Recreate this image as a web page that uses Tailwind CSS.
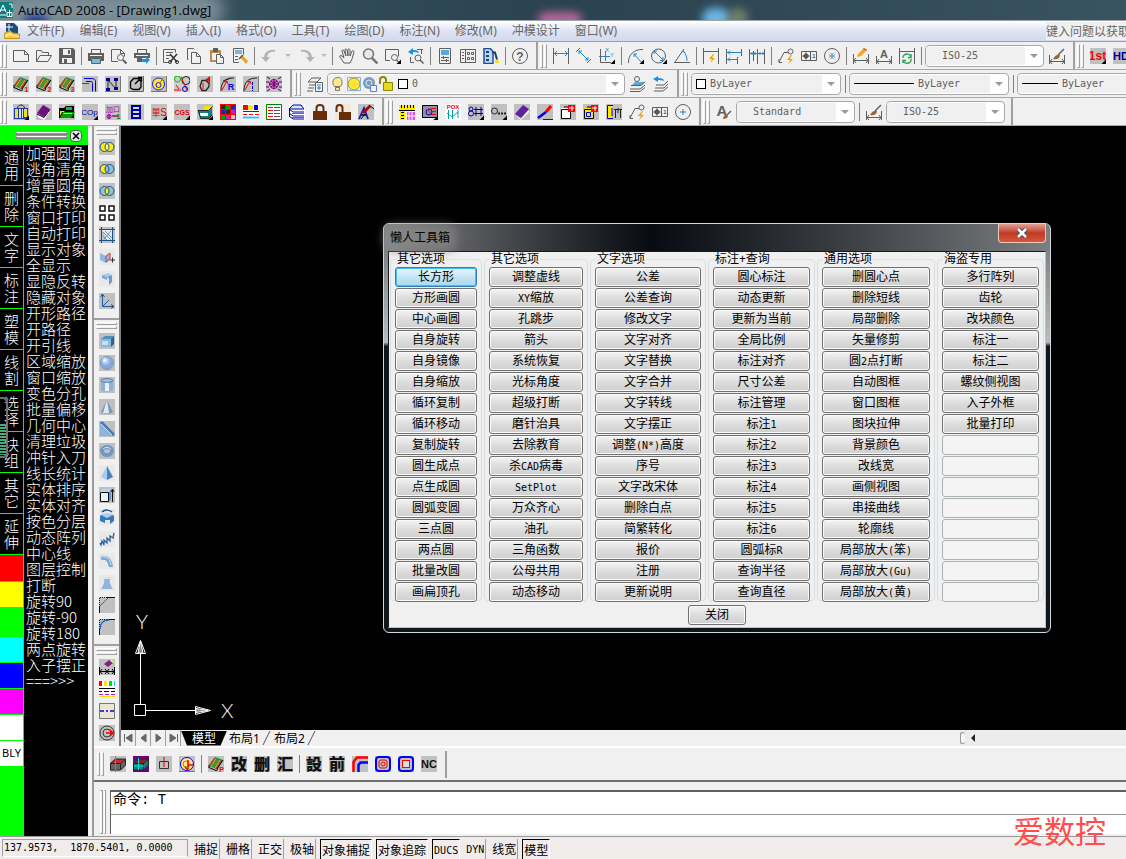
<!DOCTYPE html>
<html lang="zh-CN">
<head>
<meta charset="utf-8">
<title>AutoCAD 2008 - [Drawing1.dwg]</title>
<script src="https://cdn.jsdelivr.net/npm/@tailwindcss/browser@4"></script>
</head>
<body class="flex h-screen flex-col overflow-hidden bg-[#f0f0f0] font-['Noto_Sans','Noto_Sans_CJK_SC',sans-serif] text-xs text-black">

<header class="shrink-0">
  <div class="relative flex h-[21px] items-center overflow-hidden border-b border-[#9aa5aa] bg-linear-to-r from-[#3c5664] via-[#2b4350] to-[#3a5361]">
    <span class="absolute -left-4 -top-2 h-9 w-60 rounded-full bg-[#8fa0a8]/80 blur-sm"></span>
    <span class="absolute left-6 top-4 h-3 w-6 rounded-full bg-[#1d2f9e] blur-xs"></span>
    <span class="absolute left-[538px] top-3 h-4 w-11 rounded-full bg-[#b5659c] blur-xs"></span>
    <span class="absolute left-[702px] top-2 h-5 w-7 rounded-full bg-[#6cb4e4] blur-xs"></span>
    <span class="absolute left-[728px] top-2 h-5 w-5 rounded-full bg-[#8c9a6c]/70 blur-xs"></span>
    <svg class="relative h-4 w-[13px] shrink-0" viewBox="0 0 13 16"><path fill="#0e7c7b" d="M0 0h13v16H0z"/><path fill="none" stroke="#fff" d="M0 10l3-7 3 7M0 8h6M7 10.500h5v4H7zM9.500 8v7M0 13h6M9 2h3v4"/></svg>
    <h1 class="relative ml-[5px] whitespace-nowrap font-['Open_Sans','Noto_Sans_CJK_SC',sans-serif] text-[13px] leading-5">AutoCAD 2008 - [Drawing1.dwg]</h1>
  </div>
  <nav class="flex h-[21px] items-center border-b border-[#a0a0a0] bg-linear-to-b from-white via-[#dfe4f3] to-[#d3daee] pl-1 text-[#666]" aria-label="菜单">
    <svg class="mr-[7px] size-4 shrink-0" viewBox="0 0 16 16"><path fill="#1a4d7c" d="M2 0h8l4 4v8H2z"/><path fill="#f6c945" stroke="#c9971e" d="M.5 15.500v-5.500l6-2 2 2 7 1v4.500z"/><path fill="#ffe9a0" d="M1 12l6-2 2 2 6 1v1l-6-1-2-1-6 2z"/><path stroke="#fff" d="M5 1v7M2 4h7"/></svg>
    <div id="menus" class="flex gap-[15px] whitespace-nowrap"></div>
    <input class="ml-auto h-[18px] w-20 shrink-0 bg-[#f0f0f0] text-xs text-[#666] placeholder:text-[#666] placeholder:opacity-100" aria-label="帮助搜索" placeholder="键入问题以获取帮助">
  </nav>
</header>

<div id="bars" class="shrink-0 overflow-hidden"></div>

<main class="flex min-h-0 flex-1">
  <aside class="relative flex w-[88px] shrink-0 flex-col bg-black text-white">
    <div class="flex h-[19px] shrink-0 items-center bg-[#00ff00] pl-4">
      <span class="mr-[3px] flex w-[51px] flex-col gap-px"><i class="h-[3px] border border-[#808080] border-t-white"></i><i class="h-[3px] border border-[#808080] border-t-white"></i></span>
      <button aria-label="关闭面板" class="flex size-3 items-center justify-center rounded-sm border border-[#555] bg-[#e8e8e8]"><svg class="size-2" viewBox="0 0 8 8"><path stroke="#000" stroke-width="1.600" d="M1 1l6 6M7 1L1 7"/></svg></button>
    </div>
    <div class="flex min-h-0 flex-1">
      <div id="cats" class="flex w-6 shrink-0 flex-col border-r border-[#00ff00] bg-[#00ff00]"></div>
      <div id="cmds" class="flex flex-1 flex-col items-start overflow-hidden pl-[2px] font-['Noto_Sans_CJK_SC',sans-serif] text-[15px] leading-4 font-light whitespace-nowrap"></div>
    </div>
    <svg class="absolute left-0 top-[271px] h-[61px] w-2" viewBox="0 0 8 61"><path fill="none" stroke="#707070" stroke-width="2" d="M0 1h4l3 3v53l-3 3H0"/><path stroke="#3fae7c" stroke-width="6" stroke-dasharray="2 1" d="M3 27v31"/></svg>
  </aside>
  <div class="w-[6px] shrink-0 border-r-2 border-[#9a9a9a] bg-[#f4f4f4]"></div>

  <div class="flex min-w-0 flex-1 flex-col">
    <div class="flex min-h-0 flex-1">
      <div id="vbar" class="flex w-[25px] shrink-0 flex-col items-center"></div>
      <div class="flex min-w-0 flex-1 flex-col border-l-2 border-[#808080]">
        <section class="relative min-h-0 flex-1 bg-black" aria-label="绘图区">
          <svg class="absolute bottom-[7px] left-2 h-28 w-28" viewBox="0 0 112 112" fill="none" stroke="#fff"><path d="M5.500 93.500h11v11h-11zM11.500 93V42M17 99.500h49M6.500 42.500l5-13 5 13zM66.500 95.500v8l15-4z"/><path fill="#888" d="M9 42l2.500-12 2.500 12zM67 97.500v4l12-2z"/><text stroke="none" fill="#fff" font-family="Lato" font-weight="300" font-size="20" x="7" y="18">Y</text><text stroke="none" fill="#fff" font-family="Lato" font-weight="300" font-size="20" x="92" y="107">X</text></svg>

          <div role="dialog" aria-labelledby="dlg" class="absolute left-[262px] top-[97px] w-max rounded-md border border-[#d4dadc] bg-linear-to-b from-[#6d7376] from-0% via-[#b9bcbe] via-29% to-[#10161a] to-30% px-1 pb-1">
            <div class="-mx-[3px] flex h-[27px] items-center justify-between rounded-t bg-linear-to-r from-[#858585] via-[#080c12] via-40% to-[#7c7f81] pl-1">
              <h2 id="dlg" class="rounded bg-[#8a8a8a]/60 px-px text-xs shadow-[0_0_8px_6px_rgba(138,138,138,.6)]">懒人工具箱</h2>
              <button aria-label="关闭窗口" class="mr-[3px] flex h-[19px] w-12 items-center justify-center self-start rounded-b border border-t-0 border-[#e8c8c0] bg-linear-to-b from-[#e0a093] via-[#c03a22] via-50% to-[#d5573a]"><svg class="h-[10px] w-3" viewBox="0 0 12 10"><path stroke="#444b60" stroke-width="4.500" d="M2 1l8 8M10 1L2 9"/><path stroke="#fff" stroke-width="2.500" d="M2 1l8 8M10 1L2 9"/></svg></button>
            </div>
            <div class="border border-[#1a1a1a] border-b-[#c0c0c0] border-r-[#c0c0c0] bg-[#f0f0f0] pb-[2px]">
              <div id="groups" class="flex gap-[2px] px-px"></div>
              <div class="mt-1 flex justify-center"><button class="h-5 w-[58px] rounded-[3px] border border-[#707070] bg-linear-to-b from-[#f4f4f4] from-0% via-[#dddddd] via-50% to-[#cfcfcf] text-xs leading-4 shadow-[inset_0_0_0_1px_#fafafa]">关闭</button></div>
            </div>
          </div>
        </section>

        <div class="flex h-4 shrink-0 items-center bg-[#f0f0f0]">
          <div id="tabnav" class="flex h-full"></div>
          <div class="flex h-full items-center" role="tablist">
            <button role="tab" aria-selected="true" class="h-[15px] w-[46px] bg-black text-xs leading-4 text-white [clip-path:polygon(0_0,100%_0,86%_100%,13%_100%)]">模型</button>
            <button role="tab" class="h-[15px] px-[2px] text-xs leading-4">布局1</button>
            <svg class="h-4 w-[10px]" viewBox="0 0 10 16"><path stroke="#555" d="M1 15L8 1"/></svg>
            <button role="tab" class="h-[15px] px-[2px] text-xs leading-4">布局2</button>
            <svg class="h-4 w-[10px]" viewBox="0 0 10 16"><path stroke="#555" d="M1 15L8 1"/></svg>
          </div>
          <div class="ml-auto flex h-full w-[166px] items-center bg-[#ececec]">
            <i class="h-3 w-[5px] rounded-sm border border-[#999] border-r-0 bg-[#f8f8f8]"></i>
            <button aria-label="向左滚动" class="ml-[6px] flex h-4 w-4 items-center"><svg class="h-2 w-1" viewBox="0 0 4 8"><path d="M4 0v8L0 4z" fill="#222"/></svg></button>
          </div>
        </div>
      </div>
    </div>

    <div id="bbar" class="flex h-[34px] shrink-0 items-center border-t-2 border-white pl-px"></div>

    <div class="flex h-14 shrink-0 border-t-2 border-[#707070] pt-[8px] pb-[2px]">
      <span class="ml-[6px] mr-1 flex w-[6px] shrink-0 gap-px"><i class="w-[3px] border border-[#999] border-l-white"></i><i class="w-[3px] border border-[#999] border-l-white"></i></span>
      <div class="flex min-w-0 flex-1 flex-col border-l border-t-2 border-[#606060] bg-white">
        <output class="flex h-[23px] items-start border-b border-[#999] pl-[2px] font-['Liberation_Mono','Noto_Sans_CJK_SC',monospace] text-sm leading-4">命令: T</output>
        <input aria-label="命令行" class="w-full min-h-0 flex-1 px-1 text-sm outline-none">
      </div>
    </div>
  </div>
</main>

<footer id="status" class="flex h-[23px] shrink-0 items-start gap-[5px] border-t border-[#999] bg-[#f0ecec] pl-[2px] pt-[2px] font-['Noto_Sans_CJK_SC',sans-serif]"></footer>

<div class="pointer-events-none absolute bottom-2 right-5 font-['Noto_Sans_CJK_SC',sans-serif] text-[31px] leading-[42px] text-[#ff4d4d]">爱数控</div>

<script>
const F=(c,d)=>`<path stroke="none" fill="${c}" d="${d}"/>`;
const S=(c,d,w=1)=>`<path stroke="${c}" stroke-width="${w}" d="${d}"/>`;
const C=(x,y,r,c='#5f5f5f',f='none',w=1)=>`<circle cx="${x}" cy="${y}" r="${r}" stroke="${c}" fill="${f}" stroke-width="${w}"/>`;
const X=(t,c,s,x,y,font='Liberation Sans',w=400)=>`<text x="${x}" y="${y}" text-anchor="middle" stroke="none" fill="${c}" font-size="${s}" font-weight="${w}" font-family="${font}, Noto Sans CJK SC">${t}</text>`;
const G=F('#c0c0c0','M0 0h16v16H0z'), T=F('#000','M16 11.500v4.500h-4.500z');
const D='#5f5f5f', B='#1e88d2', N='#00009c', R='#ff0000';
const bolt=(x,y)=>F('#f5a000',`M${x+4} ${y}l-4 5h3l-2 4 5-5h-3l2-4z`);
const book=c=>G+F('#0a8c60','M1 10L7 1l8 3-6 9z')+F('#a05018','M1 9l5-7 3 1-5 8zM10 4l4 1-5 8-3-1z')+F('#30a040','M8 3l3 1-5 8-2-1z')+S('#000','M1 11.500l7 3 2-1M1 9v3M9 13l6-9')+S('#e0b030','M3 10.500l5-8M7 12l5-8')+X(c,R,7,13.500,16,'Liberation Sans',700);
const cube=(a,b)=>F(a,'M0 7l5-4h11v6l-5 5H0z')+F(b,'M1 7l4-4h10l-4 4z')+S('#222','M.5 7.500l5-4.500h10v6l-5 5H.5zM.5 7.500h10M10.500 7.500v6M10.500 7.500l5-4');
const venn=(l,r,m)=>G+F(l,'M8 4a4.500 4.500 0 1 0 0 8z')+F(r,'M8 4a4.500 4.500 0 1 1 0 8z')+F(m,'M8 4c3 2 3 6 0 8c-3-2-3-6 0-8z')+C(5.500,8,4.500,'#1d4f86')+C(10.500,8,4.500,'#1d4f86');
const heavy=t=>G+X(t,'#111',16,8,14,'Noto Sans CJK SC',900);
const I={
new:S(D,'M.5 2.500h11l4 4v7h-15zM11.500 2.500v4h4'),
open:S(D,'M.5 13.500v-11h5l1 2h6v3M.5 13.500l3.500-6h11.500l-3.500 6z'),
save:F(D,'M0 0h14l2 2v14H0z')+F('#f0f0f0','M4 1h8v6H4zM3 10h10v5H3z')+F(D,'M9 2h2v4H9zM5 11h3v4H5z'),
print:F(D,'M3 1h10v4H3zM0 5h16v8H0z')+F('#f0f0f0','M4 2h8v3H4zM2 7h12v1H2zM3 10h10v5H3z')+F('#7db5dc','M4 11h8v4H4z')+S(D,'M3.500 10.500h9v5h-9z'),
preview:S(D,'M7 13.500H.5v-12h9l4 4v3M9.500 1.500v4h4')+C(9.500,9.500,3)+S(D,'M12 12l3.500 3.500',2),
publish:F(D,'M3 1h10v4H3zM0 5h16v5H0z')+F('#f0f0f0','M4 2h8v3H4zM2 7h12v1H2z')+F(D,'M3 9h5v5H3z')+F('#1e90e0','M8 11h4V8l4 4-4 4v-2H8z'),
cut:S(D,'M6 14.500H.5v-13h12v3M3 4.500h7M3 7.500h5M3 10.500h3')+S('#333','M7 6l7 8M14 6l-7 8',1.500)+C(7,14,1.500,'#333')+C(14,14,1.500,'#333'),
copy:S(D,'M2.500 11.500h-1v-11h6l1 1')+F('#f0f0f0','M5 4h6l4 4v8H5z')+S(D,'M5.500 4.500h5l4 4v7h-9zM10.500 4.500v4h4'),
paste:F('#b98a55','M1 2h11v12H1z')+F('#f0f0f0','M3 5h7v7H3z')+F(D,'M4 0h5v4H4z')+F('#f0f0f0','M7 6h5l3 3v7H7z')+S(D,'M7.500 6.500h4l3 3v6h-7zM11.500 6.500v3h3'),
match:S(D,'M7 14.500H1.500v-14h10v6')+F('#7db5dc','M3 2h7v4H3z')+S(D,'M3 8.500h3M3 11.500h3')+F('#f0a020','M8 9l2-2 6 6-2 3z')+S('#555','M7 11l4-4',1.500),
undo:F('#b4b4b4','M0 9h9L5 14zM3 10C3 4 8 1 14 2v2C10 3 6 5 6 10z'),
redo:F('#b4b4b4','M16 9H7l4 5zM13 10C13 4 8 1 2 2v2c4-1 8 1 8 6z'),
dd:F('#bbb','M5 6h6l-3 3z'),
hand:S(D,'M5 15L1 9c-1-2 1-2 2-1l2 2L3 3c0-2 2-1 2 0l2 5-1-6c0-2 2-1 2 0l1 6V2c0-2 2-1 2 0v6l2-5c1-1 2 0 2 1l-2 7-2 4z'),
zoom:C(6.500,6,5,'#777','#e8e8e8',1.500)+S('#777','M10 10l5.500 5.500',2.500),
zoomw:S(D,'M5 12.500H.5v-11h13v7')+C(9.500,9.500,3)+S(D,'M11.500 12l2 2',1.500)+T,
zoomp:F('#1e90e0','M0 4l5-4v2c4 0 6 1 6 3-2-1-4-1-6-1v3z')+S(D,'M2.500 9v5.500H6M13.500 1v5M9 1.500h6')+C(10,10,3)+S(D,'M12 12l3.500 3.500',1.500),
props:S(D,'M2.500.5h11v15h-11z')+F('#5aa7dc','M4 2h8v5H4z')+S(D,'M4 9.500h8M4 12.500h8M6.500 8v3M9.500 11v3'),
dc:S(D,'M.5 1.500h15v13H.5zM5.500 1.500v13M2 4.500h2M2 7.500h2M2 10.500h2')+S(D,'M7.500 4.500h2v2h-2zM11.500 4.500h2v2h-2zM7.500 9.500h2v2h-2zM11.500 9.500h2v2h-2z'),
tool:F('#bcd8f0','M1 0h8v16H1z')+S('#1d4f9e','M1 .5h6l3 3V15.500H1z',1.500)+F('#1d3f6e','M3 3h3v2H3zM3 7h3v2H3zM3 11h3v2H3z')+S('#1d3f6e','M9 4.500h3l2 7',2)+F('#ffd83a','M12 12h4v3h-4z'),
help:C(8,8,7.500)+X('?',D,12,8,12.500,'Liberation Sans',700),
dlin:S(D,'M.5 0v16M15.500 0v16')+S(B,'M1 5.500h14M4 3L1.500 5.500 4 8M12 3l2.500 2.500L12 8'),
dali:S(D,'M0 4l4-4M11 15l4-4')+S(B,'M3 3l9 9M3 6V3h3M12 9v3H9'),
dord:S(B,'M0 8.500h11M6.500 3v10')+S(D,'M1.500 1v13.500H12')+X('X',B,6,8,4)+X('Y',B,6,13,9)+T,
drad:S(D,'M15 1.500C6 1 0 7 .5 15')+S(B,'M6 6l7 8M6 9V6h3')+T,
ddia:C(7.500,8,7)+S(B,'M3 3l10 10M3 6V3h3M12 9v3.500H9')+T,
dang:S(D,'M0 14.500h16M1 14L10 1')+S(B,'M9 3c3 3 4 6 4 10M11 5L9 2.500'),
dq:S(D,'M.5 0v16M15.500 0v16M0 3.500h16')+bolt(6,6),
dbase:S(D,'M.5 1v15M15.500 1v7M11.500 9v7')+S(B,'M1 4.500h14M1 11.500h10M4 2.500L2 4.500l2 2M4 9.500l-2 2 2 2'),
dcont:S(D,'M.5 1v15M8.500 1v15M15.500 1v15M4.500 3v10')+S(B,'M1 5.500h14M3 4v3M11 4v3M6 4v3M14 4v3'),
lead:S(D,'M1 14L6 4.500h4M1 11v3.500h3')+C(12.500,3.500,2.500)+bolt(9,7),
tol:S(D,'M.5 3.500h15v9H.5zM9.500 3.500v9')+C(5,8,2,'#333')+S('#333','M1.500 8h7M5 4.500v7')+X('.1','#222',6,12,10),
cen:C(8,8,7.500)+S(B,'M8 5v6M5 8h6'),
dedit:S(D,'M.5 6v10M15.500 6v10M0 12.500h16M3 10l-2 2.500L3 15M13 10l2 2.500-2 2.500')+F('#f5a623','M4 9l1-3 6-6 3 2-6 6z')+F('#e05040','M11 0l3 2-1 1-3-2z'),
dtxt:S(D,'M.5 8v8M15.500 8v8M0 13.500h16M3 11l-2 2.500L3 16M13 11l2 2.500-2 2.500')+X('A',D,11,8,10,'Liberation Sans',700),
dupd:S(D,'M.5 0v16M15.500 0v16M0 3.500h16')+S('#1ea54a','M4 10a4 3.500 0 0 1 8-1M12 11a4 3.500 0 0 1-8 1.500M12 6v3.500H9M4 15v-2.500h3',1.300),
dsty:S(D,'M.5 7v9M15.500 7v9M0 13.500h16M3 11l-2 2.500L3 16M13 11l2 2.500-2 2.500')+S(D,'M9 7l6-6',1.500)+F('#a0642a','M4 11c2-4 5-5 7-4 0 3-3 5-7 4z'),
first:G+X('1st',R,12,7.500,12,'Liberation Sans',700)+T,
hd:G+X('HD',N,11,8,12,'Liberation Sans',700),
b1:book('1'),b2:book('2'),b3:book('3'),bp:book('P'),
elbow:G+S('#0000e0','M2 2.500h8c2 0 3.500 1 3.500 3v10M4 5.500h5c1 0 1.500.5 1.500 2v8')+S(R,'M0 7.500h7'),
nodes:G+S('#222','M3 14V4l8 9V3')+F(N,'M1 2h4v3H1zM9 2h4v3H9zM9 11h4v3H9zM1 12h4v3H1z')+S('#777','M0 15.500h15.500V0'),
arc:G+S('#000','M2.500 12V6l3-3.500H10l3 3V11l-2 2.500H5zM7 8l6-6M10 1.500h3.500v4',1.300)+S('#666','M0 15.500h15.500V0'),
circ:G+C(7.500,8,6,'#2020e0','#ffe23a')+C(7.500,9,2.500,'#2020e0')+S('#b08000','M8 8l5-7')+S('#777','M0 15.500h15.500V0'),
mix:F('#ccc','M0 0h16v16H0z')+C(3.500,3,3,'#00c000')+C(12,4.500,4,'#222')+S(R,'M7 1l6 13M0 14h7M2 9l3 4')+C(11,13,2.500,'#0000e0'),
rot:G+S('#222','M5 4.500h4l3 3v3l-3 4H5l-2-4z',1.300)+F(R,'M8 4l5-4v6z')+S(R,'M12.500 2v6M6 7v6'),
rr:G+S('#222','M1 15C1 6 5 2 14 2M3 5l8-3')+S(R,'M2 14L7 5M4 6l3-1 1 3')+X('R','#0000e0',9,11,14,'Liberation Sans',700),
rd:G+S('#222','M1 15C1 6 5 2 14 2')+S(R,'M2 14L7 5M4 6l3-1 1 3')+`<path stroke="#0000e0" stroke-dasharray="3 1" d="M9.500 6v9"/>`+S('#777','M15.500 0v16H0'),
bug:G+C(8,8,4.500,'#900090','#e070e0')+S('#500050','M8 3v10M3 8h10M4 3L1 1M12 3l3-2M4 13l-3 2M12 13l3 2M0 6h3M13 6h3M0 11h3M13 11h3M5 5c2 2 4 2 6 0M5 11c2-2 4-2 6 0'),
layers:S(D,'M1 6l4-4h9l-4 4zM2 9h6M1 12h6M0 15h6')+F('#f4f4f4','M8 6h8v10H8z')+S(D,'M8.500 6.500h7v9h-7z')+S(B,'M10 9h4M10 12h4M12 10v4'),
lfrz:F('#5aa7dc','M1 10l4-4h10l-4 4z')+S(D,'M0 13h10l5-4M0 15.500h10l5-4M1 9.500h10l4-4')+C(7,3,2.500),
lprev:F('#1e90e0','M0 3l5-3v2c4 0 6 1 6 3-2-1-4-1-6-1v2z')+S(D,'M3 9h8l4-4M2 12h9l4-4M1 15h9l5-4'),
bag:G+F('#2038b0','M1 4h14v9l-3 2H1z')+F('#f0e020','M2 5h3v9H2zM11 5h3v8h-3z')+F('#c8e8ff','M6 5h2v9H6zM9 5h1v9H9z')+S('#222','M4.500 4C5 0 11 0 11.500 4')+T,
pbook:G+F('#701080','M1 9l6-8 7 4-6 8z')+F('#fff','M2 11l6 3 5-7v2l-5 7-6-3z')+S('#300040','M1 10l7 3.500 6-8'),
folder:G+F('#000','M0 4h5l2-2h8v12H0z')+F('#00c040','M7 3h6v3H7z')+F('#ffe800','M1 7h4l1 1H3l-2 4z')+F('#00a000','M4 8h12l-4 6H1z')+F('#ffe800','M5 9h8v1H4z'),
cop:G+X('COp',N,8,7.500,11)+T,
add:G+X('加口','#a000a0',7,8,8)+S('#a000a0','M7 12h6M4 10v5',1.500)+C(4,12.500,2,'#a000a0')+X('1','#008000',7,13.500,15,'Liberation Sans',700),
film:G+F(N,'M3 1h10v14H3z')+F('#d8d8d8','M5 3h6v2H5zM5 7h6v2H5zM5 11h6v2H5z'),
dan:G+X('單','#e00000',9,5,12)+X('S','#e00000',10,12.500,12)+T,
cgs:G+X('CGS','#e00000',7,8,11,'Liberation Sans',700)+T,
boxy:G+F('#108080','M1 6h11l3-3v8l-3 4H3z')+F('#f0e800','M8 2h6v3l-3 2H5z')+F('#fff','M3 9h8v3H3z')+S('#222','M1 6.500h10.500l4-4M1 6l3 8.500h8l3-4')+T,
pal:F(R,'M0 0h16v16H0z')+F('#203020','M1 1h4v4H1zM6 6h4v4H6z')+F('#00a000','M6 1h4v4H6zM1 11h4v4H1z')+F('#2020c0','M11 1h4v4h-4zM1 6h4v4H1z')+F('#c020c0','M11 6h4v4h-4zM6 11h4v4H6z')+F('#e0c0e0','M11 11h4v4h-4z'),
flag:F('#fff','M0 0h16v16H0z')+F(R,'M0 1h5v5H0z')+F('#ffe800','M5 1h5v5H5z')+F('#0000e0','M11 1h4v5h-4z')+S('#333','M0 7.500h16','1')+S(R,'M0 10.500h4M6 10.500h4M12 10.500h4',1)+S('#30c0ff','M0 13.500h16',2),
list:F('#fff','M0 0h16v16H0z')+S('#008000','M.5.500h15v15H.5z')+S(R,'M2 3.500h5M2 6.500h5M2 9.500h5M2 12.500h5')+S('#555','M8 3.500h6M8 6.500h6M8 9.500h6M8 12.500h6'),
stack:F('#fff','M0 0h16v16H0z')+F('#c8e8ff','M0 5l4-4h11l-3 4z')+S('#0000a0','M0 5l4-4h8l3 4zM0 5l4 3h11M0 9l4 3h11M0 12l4 3h11M.5 5v7')+S('#00a0a0','M3 9.500h12M3 13.500h12'),
lock:F('#6b2c08','M1 7h14v9H1z')+S('#6b2c08','M4.500 7V4c0-4 7-4 7 0v3',2),
unlock:F('#f0e8d8','M0 0h16v16H0z')+F('#6b2c08','M4 8h12v8H4z')+S('#6b2c08','M1.500 8V4c0-4 6-4 6 0v4',2),
wand:G+S('#1020b0','M1 15L6 4l4 11M3 11h5',1.800)+S('#c00000','M5 9l7-7',3)+S('#000','M11 1l5 4M3 15l4-5'),
ruler:F('#ffe800','M0 1h16v5H0zM1 6h5v10H1z')+S('#000','M0 6.500h16M2.500 1v3M5.500 1v3M8.500 1v3M11.500 1v3M14.500 1v3M2 8.500h3M2 11.500h3M2 14.500h3')+F('#e050e0','M8 8h8v8H8z')+S('#fff','M10 8v8M13 8v8M8 12h8'),
scr:F('#9090a8','M0 1h16v13H0z')+S('#000','M.5 1.500h15v12H.5z')+C(7,8,3,'#0000c0')+S(R,'M5 5l5 6M9 4.500h5M9 7.500h5M9 10.500h5')+T,
pox:F('#fff','M0 0h16v16H0z')+X('POX',R,6,8,5,'Liberation Sans',700)+S('#00a0a0','M3.500 6v9M7.500 6v9M2 9l5 4 6-5M13 6v8'),
eight:G+C(3,5,2,N)+C(3,9.500,2.500,N)+S(N,'M6 5.500h9M6 9.500h9M8 3v9M13 3v9')+T,
oo:G+C(3.500,7,3,'#222')+S('#222','M7 9.500h2M10 9.500h2M13 9.500h2',2)+T,
pb2:G+F('#6020a0','M1 10L9 1l6 4-8 9z')+F('#fff','M2 12l5 3 8-9v2l-8 8z'),
pen:G+S(R,'M14 2L9 8',3)+S('#0000e0','M9 8L1 14',2.500)+S('#222','M6 15.500h10'),
tags:G+F('#fff','M1 4h9v11H1z')+S('#000','M1.500 5.500h9v9h-9zM4 3h8')+F(R,'M8 1h7v7H8z')+S('#fff','M9 4h5M12 2v5'),
tagy:G+F('#ffe800','M1 4h9v11H1z')+S('#000','M1.500 5.500h9v9h-9zM4 3h8')+F(R,'M8 1h7v7H8z')+S('#fff','M9 4h5M12 2v5')+S('#0000e0','M3.500 12.500v-4h4v4z'),
meas:G+F('#ffe800','M1 2h5v12H1z')+S('#0000c0','M7 1.500H1.500v13H7M6 4v8')+S('#222','M8 5.500h8M9.500 5v9M14.500 5v9M12 4v5'),
brush:X('A',D,15,6,12,'Liberation Sans',700)+F('#a0642a','M7 15c0-3 2-4 4-4s1 4-4 4z')+S(D,'M11 11l4-4',1.500),
v1:venn('#ffee00','#ffee00','#fff59a'),v2:venn('#ffee00','#8fc4d8','#8fc4d8'),v3:venn('#8fc4d8','#8fc4d8','#ffee00'),
four:F('#fff','M0 0h16v16H0z')+S('#111','M1 1h5v5H1zM10 1h5v5h-5zM1 10h5v5H1zM10 10h5v5h-5z',1.500),
grid:G+F('#dcecf8','M3 3h10v10H8z')+S('#1d4f86','M2.500 0v16M0 2.500h16M13.500 0v16M0 13.500h16')+S('#7098c0','M4 5l8 8M6 4l7 7M4 9l4 4M5 12l7-8'),
sect:F('#e8e8e8','M0 0h16v16H0z')+F('#90b8e0','M1 4l6 3 4-3v7l-4 3-6-3z')+S('#d04040','M7 7l4-3v6l-4 3z')+S('#333','M11 11h5M13.500 8.500v5'),
bend:F('#e8e8e8','M0 0h16v16H0z')+F('#a8c8e8','M3 4l6-2 4 2-5 2z')+F('#6a9ccc','M8 6l5-2v7l-3 3v-6z')+F('#80a8d0','M3 4l5 2v3l-5-2z'),
ucs:G+S('#1d5f9e','M3.500 1v12.500H15M1.500 4l2-3 2 3M12 11.500l3 2-3 2M4 13l6-6'),
box:G+F('#8ab8dc','M2 6l4-3h9v8l-3 3H2z')+F('#4f8fc0','M2 6l4-3h9l-3 3z')+F('#2e6398','M12 6l3-3v8l-3 3z')+F('#c8dff0','M3 8h6v4H3z'),
sph:G+C(8,8,6.500,'#7898c0','#86a8dc')+C(6.500,6,4,'none','#a8c4ec')+C(6,5.500,2,'none','#eef6ff'),
cyl:G+F('#90b0d4','M2 3h12v10c-2 2-10 2-12 0z')+F('#e8f2fb','M6 4h4v10H6z')+`<ellipse cx="8" cy="3.500" rx="6" ry="1.800" fill="#a8c4e2" stroke="#4a78a8"/>`,
cone:G+F('#8098b8','M8 1l6 12c-2 2-10 2-12 0z')+F('#dce8f4','M8 1l2 13H4z'),
wedge:G+F('#8ab4dc','M1 1v14h14z')+S('#4a7cb4','M2 1l13 13',3)+S('#cfe0f2','M2 3l11 11'),
torus:G+`<ellipse cx="8" cy="8" rx="5" ry="4" stroke="#6f98c4" stroke-width="4"/>`+S('#d4e6f6','M4 6c2-2 6-2 8 0'),
pyr:F('#e8e8e8','M0 0h16v16H0z')+F('#a4ccec','M8 1L2 12l6 3z')+F('#4a84be','M8 1l6 11-6 3z'),
ext:G+F('#b8d4ec','M1 5l3-3h7v3z')+F('#eaf4fb','M1 5h8v10H1z')+S('#111','M1.500 5.500h8v9h-8zM13.500 3v12M12 5l1.500-3L15 5')+F('#5b94c8','M10 5l2-2v9l-2 3z'),
rev:F('#e8e8e8','M0 0h16v16H0z')+F('#3a78b8','M1 7c2-3 12-3 14 0v5l-4 3v-4H6v3l-5-2z')+F('#a8d0f0','M2 6c3-2 9-2 12 0L8 9z')+S('#1d4f86','M3 3c3-3 8-2 10 0',1.500),
helix:F('#e8e8e8','M0 0h16v16H0z')+S('#3060a0','M1 12l1 2 1-4 2 4 0-5 3 3 0-5 3 3 0-5 3 2 1-5',1.300),
sweep:F('#e8e8e8','M0 0h16v16H0z')+S('#7ba4d0','M2 5c6-1 9 2 10 9',4)+S('#dceaf6','M2 4c6-1 9 2 10 8'),
loft:F('#e8e8e8','M0 0h16v16H0z')+F('#8fb4e0','M4 2h8c-2 3-2 6 2 12H2c4-6 4-9 2-12z')+F('#d4e6f6','M4 2h8l-1 2H5z'),
cham:G+`<path stroke="#111" stroke-dasharray="1 1" d="M8 .5H.5V9"/>`+S('#111','M8 .5h8M.5 9v7')+S('#2070c0','M1 9l8-8'),
fil:G+`<path stroke="#111" stroke-dasharray="1 1" d="M8 .5H.5V9"/>`+S('#111','M8 .5h8M.5 9v7')+S('#2070c0','M1 10c0-5 3-9 9-9',1.500),
ers:G+F('#802080','M5 5l5-4 4 3-5 4z')+F('#e8e070','M12 0l4 2-2 2-3-2z')+S('#000','M.5 8v8M15.500 8v8M0 12.500h16M3 10l-2 2.500L3 15M6 10l4 5M10 10l-4 5M13 10l2 2.500-2 2.500'),
lts:F('#fff','M0 0h16v16H0z')+F(R,'M0 0h3v5H0z')+F('#ffe800','M5 0h3v5H5z')+F('#00e000','M10 0h3v5h-3z')+F('#00e0e0','M15 0h1v5h-1z')+S('#000','M0 7.500h16M0 10.500h3M5 10.500h5M12 10.500h4')+S('#e000e0','M0 13.500h4M6 13.500h4M12 13.500h4')+S('#ffe800','M0 15.500h16'),
cl:F('#ece6d0','M0 0h16v16H0z')+S('#777','M.5.500h15v15H.5z')+S('#0000ff','M1 8h4M7 8h2M11 8h4',1.500),
cir:G+C(8,8,7,'#333')+C(8,8,4,'#333')+S(R,'M7 8h7M11 5l3 3-3 3',1.500),
c1:G+cube('#666','#c03030')+S('#00e000','M5.500 0v16'),
c2:F('#700080','M0 0h16v16H0z')+cube('#108080','#a01818')+S('#00e0e0','M1 10h10M5.500 2v12'),
p1:G+S('#333','M3.500 5.500h9v7h-9z')+S('#d00000','M8 1v10'),
p2:G+C(8,8,6.500,'#0000e0','#ffe890')+C(7,8,3,'#b08000')+S(R,'M9 4v9M6 11l3 3M9 9h5',1.500)+S('#777','M0 15.500h16'),
t1:heavy('改'),t2:heavy('删'),t3:heavy('汇'),t4:heavy('設'),t5:heavy('前'),
pipe:G+S(R,'M1.500 16V6L5 1.500h11',2.500)+S('#0000ff','M6.500 16V9l2-2.500H16',2.500),
sq1:G+`<rect x="1" y="1" width="14" height="14" rx="3" stroke="#0000ff" stroke-width="2"/><rect x="4" y="4" width="8" height="8" rx="2" stroke="#f00"/>`+C(8,8,2,R),
sq2:G+`<rect x="1" y="1" width="14" height="14" rx="3" stroke="#0000ff" stroke-width="2"/><rect x="4.500" y="4.500" width="7" height="7" stroke="#f00" fill="#ddd"/>`,
nc:G+X('NC','#111',11,8,12,'Liberation Sans',700)};
const svg=n=>`<svg class="size-4 shrink-0" viewBox="0 0 16 16" fill="none" aria-hidden="true">${I[n]}</svg>`;
const grip='<span class="flex h-[24px] w-[11px] shrink-0 items-stretch gap-px pl-[2px]"><i class="w-[3px] border border-[#a0a0a0] border-l-white border-t-white"></i><i class="w-[3px] border border-[#a0a0a0] border-l-white border-t-white"></i></span>';
const sep='<i class="mx-[2px] h-[18px] w-[2px] shrink-0 border-r border-[#808080]"></i>';
const ic=n=>`<button aria-label="${n}" class="flex h-6 w-[23px] shrink-0 items-center justify-center">${svg(n)}</button>`;
const dd=w=>`<button aria-label="更多" class="${w} flex h-6 shrink-0 items-center justify-center">${svg('dd')}</button>`;
const icons=s=>s.split(' ').map(n=>n==='|'?sep:n==='d1'?dd('w-[15px]'):n==='d2'?dd('w-[11px]'):ic(n)).join('');
const combo=(w,label,inner)=>`<div class="${w} relative mx-px flex h-[22px] shrink-0 items-center rounded-sm border border-[#a8a8a8] bg-white"><div class="mr-[18px] flex h-[18px] flex-1 items-center whitespace-nowrap bg-[#f0f0f0] font-['DejaVu_Sans_Mono',monospace] text-[10px] text-[#606060]">${inner}</div><select aria-label="${label}" class="absolute inset-0 w-full opacity-0"><option>${label}</option></select><svg class="pointer-events-none absolute right-[5px] top-2 h-1 w-2" viewBox="0 0 8 4"><path fill="#999" d="M0 0h8L4 4z"/></svg></div>`;
const group=h=>`<div class="flex h-[27px] shrink-0 items-center border-r-2 border-[#a0a0a0] pr-[5px]">${grip}${h}</div>`;
const row=h=>`<div class="flex h-7 items-center border-b border-[#a8a8a8]"><div class="-ml-[2px] flex">${h}</div></div>`;
const sw='<i class="mx-1 size-[10px] shrink-0 border border-black bg-white"></i>';
const lay='<svg class="h-4 w-[66px] shrink-0" viewBox="0 0 66 16" fill="none"><path fill="#ffe98a" stroke="#777" d="M6.500 10.500C4 8 4 2 9.500 1.500S15 8 12.500 10.500zM7.500 11.500h4v3h-4z"/><circle cx="26" cy="8" r="6" fill="#ffe23a" stroke="#8a9a40"/><path stroke="#7db5dc" d="M19.500 1.500h13v13h-13z"/><circle cx="41" cy="7" r="6" fill="#7a9cc0"/><circle cx="41" cy="7" r="3" stroke="#dde8f2"/><path fill="#f0f0f0" stroke="#5a88b0" d="M42.500 9.500h6v6h-6z"/><path stroke="#8a8a00" stroke-width="2" d="M52 8V4c0-4 6-4 6 0v3"/><path fill="#e8d820" stroke="#8a8a00" d="M55.500 6.500h9v8h-9z"/></svg>';
const ln=w=>`<i class="${w} mx-1 h-px shrink-0 bg-black"></i>`;
document.getElementById('bars').innerHTML=
row(group(icons('new open save | print preview publish | cut copy paste match | undo d1 redo d2 | hand zoom zoomw zoomp | props dc tool | help'))
 +group(icons('dlin dali dord | drad ddia dang | dq dbase dcont | lead tol cen | dedit dtxt dupd |')+combo('w-[119px]','ISO-25','<span class="pl-4">ISO-25</span>')+icons('dsty'))+group(icons('first hd')))
+row(group(icons('b1 b2 b3 elbow nodes arc circ mix rot rr rd bug'))
 +group(icons('layers')+combo('w-[298px]','图层 0',lay+sw+'0')+icons('lfrz lprev'))
 +group(combo('w-[150px]','颜色 ByLayer',sw+'ByLayer')+sep+combo('w-[160px]','线型 ByLayer',ln('w-[60px]')+'ByLayer')+sep+combo('w-[160px]','线宽 ByLayer',ln('w-9')+'ByLayer')))
+row(group(icons('bag pbook folder cop add film dan cgs boxy pal flag list stack lock unlock wand'))
 +group(icons('ruler scr pox eight oo pb2 pen tags tagy meas lead tol cen'))
 +group(icons('brush')+combo('w-[119px]','Standard','<span class="pl-4">Standard</span>')+sep+icons('dsty')+combo('w-[119px]','ISO-25','<span class="pl-4">ISO-25</span>')));

document.getElementById('menus').innerHTML='文件(F) 编辑(E) 视图(V) 插入(I) 格式(O) 工具(T) 绘图(D) 标注(N) 修改(M) 冲模设计 窗口(W)'.split(' ').map(t=>`<button>${t}</button>`).join('');
document.getElementById('cats').innerHTML='通用 删除 文字 标注 塑模 线割 选择 块组 其它 延伸'.split(' ').map(t=>`<button class="mb-px h-10 w-full shrink-0 bg-black px-1 font-['Noto_Sans_CJK_SC',sans-serif] text-[15px] leading-4 font-light break-all text-white">${t}</button>`).join('')
+['bg-[#ff0000] h-[26px]','bg-[#ffff00] h-[25px]','bg-[#00ff00] h-[28px]','bg-[#00ffff] h-[25px]','bg-[#0000ff] h-[25px]','bg-[#ff00ff] h-[25px]','bg-white h-[25px]'].map(c=>`<button aria-label="颜色" class="${c} mb-px w-full shrink-0"></button>`).join('')
+'<button class="h-[25px] w-full shrink-0 bg-white text-[11px] text-black">BLY</button>';
document.getElementById('cmds').innerHTML='加强圆角 逃角清角 增量圆角 条件转换 窗口打印 自动打印 显示对象 全显示 显隐反转 隐藏对象 开形路径 开路径 开引线 区域缩放 窗口缩放 变色分孔 批量偏移 几何中心 清理垃圾 冲针入刀 线长统计 实体排序 实体对齐 按色分层 动态阵列 中心线 图层控制 打断 旋转90 旋转-90 旋转180 两点旋转 入子摆正 ===>>>'.split(' ').map(t=>`<button class="h-4 shrink-0">${t.replace(/>/g,'&gt;')}</button>`).join('');

const vgrip='<span class="flex h-[10px] w-full shrink-0 flex-col gap-px px-[2px] pt-[2px]"><i class="h-[3px] border border-[#a0a0a0] border-l-white border-t-white"></i><i class="h-[3px] border border-[#a0a0a0] border-l-white border-t-white"></i></span>';
document.getElementById('vbar').innerHTML=['v1 v2 v3 four grid sect bend ucs','box sph cyl cone wedge torus pyr ext rev helix sweep loft cham fil','ers lts cl cir'].map(s=>`<div class="flex w-full flex-col items-center border-b-2 border-[#a0a0a0] pb-[6px] last:border-b-0 last:pb-0">${vgrip}${s.split(' ').map(n=>`<button aria-label="${n}" class="flex h-[22px] w-6 shrink-0 items-center justify-center">${svg(n)}</button>`).join('')}</div>`).join('');
document.getElementById('bbar').innerHTML=group(icons('c1 c2 p1 p2 | bp t1 t2 t3 | t4 t5 pipe sq1 sq2 nc'));
document.getElementById('tabnav').innerHTML=['M3.500 4v8M11 4v8L5 8z','M10 4v8L5 8z','M5 4v8l5-4z','M11.500 4v8M4 4v8l6-4z'].map((d,i)=>`<button aria-label="标签导航 ${i+1}" class="h-full w-[15px] border-r border-[#a0a0a0]"><svg class="h-4 w-[14px]" viewBox="0 0 14 16"><path fill="#666" stroke="#666" d="${d}"/></svg></button>`).join('');

const groups=[['其它选项','w-[82px]','长方形,方形画圆,中心画圆,自身旋转,自身镜像,自身缩放,循环复制,循环移动,复制旋转,圆生成点,点生成圆,圆弧变圆,三点圆,两点圆,批量改圆,画扁顶孔'],
['其它选项','w-[94px]','调整虚线,XY缩放,孔跳步,箭头,系统恢复,光标角度,超级打断,磨针治具,去除教育,杀CAD病毒,SetPlot,万众齐心,油孔,三角函数,公母共用,动态移动'],
['文字选项','w-[106px]','公差,公差查询,修改文字,文字对齐,文字替换,文字合并,文字转线,文字摆正,调整(N*)高度,序号,文字改宋体,删除白点,简繁转化,报价,注册,更新说明'],
['标注+查询','w-[97px]','圆心标注,动态更新,更新为当前,全局比例,标注对齐,尺寸公差,标注管理,标注1,标注2,标注3,标注4,标注5,标注6,圆弧标R,查询半径,查询直径'],
['通用选项','w-[108px]','删圆心点,删除短线,局部删除,矢量修剪,圆2点打断,自动图框,窗口图框,图块拉伸,背景颜色,改线宽,画侧视图,串接曲线,轮廓线,局部放大(笨),局部放大(Gu),局部放大(黄)'],
['海盗专用','w-[97px]','多行阵列,齿轮,改块颜色,标注一,标注二,螺纹侧视图,入子外框,批量打印,,,,,,,,']];
const bc={n:'border-[#707070] bg-linear-to-b from-[#f4f4f4] from-0% via-[#dddddd] via-50% to-[#cfcfcf] shadow-[inset_0_0_0_1px_#fafafa]',
 a:'border-[#2c7fb8] bg-linear-to-b from-[#eaf6fd] from-0% via-[#c4e5f6] via-50% to-[#a9d9f2] shadow-[inset_0_0_0_1px_#3fc3ee]',
 d:'border-[#adb2b5] bg-[#f4f4f4]'};
const latin=t=>t.replace(/[A-Za-z0-9()*]+/g,m=>`<span class="font-['DejaVu_Sans_Mono',monospace] text-[10px]">${m}</span>`);
document.getElementById('groups').innerHTML=groups.map(([l,w,b],g)=>`<fieldset class="rounded-sm border border-[#d5dfe5] px-1"><legend class="ml-px h-[14px] px-px text-xs leading-[14px]">${l}</legend><div class="-mb-[2px] flex flex-col gap-px pt-px">${b.split(',').map((t,i)=>`<button ${t?'':'disabled aria-label="空"'} class="${w} ${g+i===0?bc.a:t?bc.n:bc.d} h-5 rounded-[3px] border text-xs leading-4">${latin(t)}</button>`).join('')}</div></fieldset>`).join('');

document.getElementById('status').innerHTML=`<output class="h-[18px] w-[186px] whitespace-pre border border-[#a0a0a0] border-b-white pl-px font-['DejaVu_Sans_Mono',monospace] text-[10px] leading-4">137.9573,  1870.5401, 0.0000</output>`
+['捕捉','栅格','正交','极轴','*对象捕捉','*对象追踪','*DUCS','DYN','线宽','*模型'].map(t=>t[0]==='*'
 ?`<button aria-pressed="true" class="-ml-px h-5 border-l border-t border-black border-r border-r-white px-px text-xs leading-[18px]">${latin(t.slice(1))}</button>`
 :`<button aria-pressed="false" class="h-5 border-r border-[#a0a0a0] px-px text-xs leading-[18px]">${latin(t)}</button>`).join('');
</script>
</body>
</html>
